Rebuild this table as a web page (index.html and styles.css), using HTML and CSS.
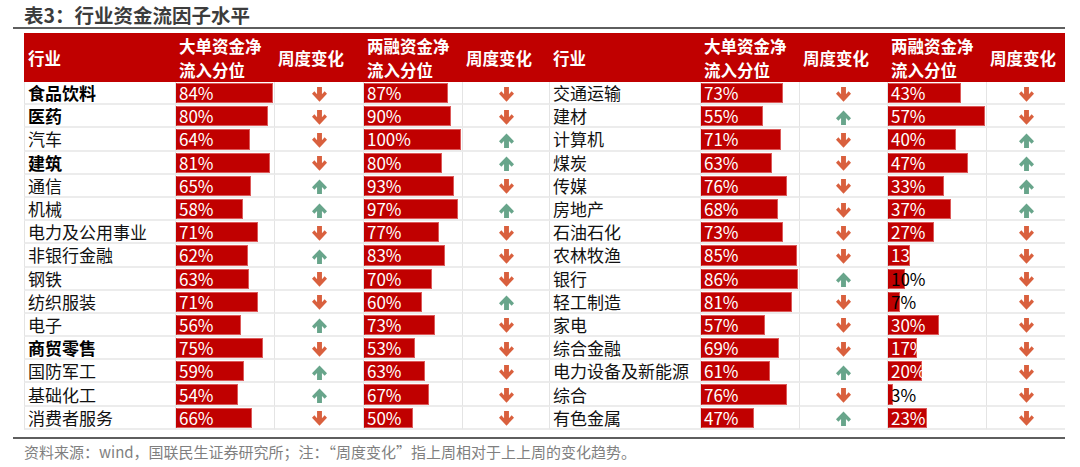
FILE: index.html
```html
<!DOCTYPE html>
<html lang="zh-CN">
<head>
<meta charset="utf-8">
<title>表3：行业资金流因子水平</title>
<link rel="stylesheet" href="styles.css">
</head>
<body>
<svg width="0" height="0" class="defs">
  <defs>
    <symbol id="dn" viewBox="0 0 16 16"><path d="M5.4 0H10.6V7.6L13.5 4.6L16 7.2L8 15.6L0 7.2L2.5 4.6L5.4 7.6Z"/></symbol>
    <symbol id="up" viewBox="0 0 16 16"><path d="M5.4 16H10.6V8.4L13.5 11.4L16 8.8L8 0.4L0 8.8L2.5 11.4L5.4 8.4Z"/></symbol>
  </defs>
</svg>
<div class="page">
  <div class="title-wrap"><h1 class="title">表3：行业资金流因子水平</h1></div>
  <div class="grid">
    <div class="hd">行业</div><div class="hd">大单资金净<br>流入分位</div><div class="hd">周度变化</div><div class="hd">两融资金净<br>流入分位</div><div class="hd">周度变化</div>
    <div class="hd">行业</div><div class="hd">大单资金净<br>流入分位</div><div class="hd">周度变化</div><div class="hd">两融资金净<br>流入分位</div><div class="hd">周度变化</div>

    <div class="c name b">食品饮料</div><div class="c bc"><div class="bar" style="width:100%">84%</div></div><div class="c ar"><svg class="i dn"><use href="#dn"/></svg></div><div class="c bc"><div class="bar" style="width:87%">87%</div></div><div class="c ar"><svg class="i dn"><use href="#dn"/></svg></div>
    <div class="c name">交通运输</div><div class="c bc"><div class="bar" style="width:84.88%">73%</div></div><div class="c ar"><svg class="i dn"><use href="#dn"/></svg></div><div class="c bc"><div class="bar" style="width:75.44%">43%</div></div><div class="c ar"><svg class="i dn"><use href="#dn"/></svg></div>

    <div class="c name b">医药</div><div class="c bc"><div class="bar" style="width:95.24%">80%</div></div><div class="c ar"><svg class="i dn"><use href="#dn"/></svg></div><div class="c bc"><div class="bar" style="width:90%">90%</div></div><div class="c ar"><svg class="i dn"><use href="#dn"/></svg></div>
    <div class="c name">建材</div><div class="c bc"><div class="bar" style="width:63.95%">55%</div></div><div class="c ar"><svg class="i up"><use href="#up"/></svg></div><div class="c bc"><div class="bar" style="width:100%">57%</div></div><div class="c ar"><svg class="i dn"><use href="#dn"/></svg></div>

    <div class="c name">汽车</div><div class="c bc"><div class="bar" style="width:76.19%">64%</div></div><div class="c ar"><svg class="i dn"><use href="#dn"/></svg></div><div class="c bc"><div class="bar" style="width:100%">100%</div></div><div class="c ar"><svg class="i up"><use href="#up"/></svg></div>
    <div class="c name">计算机</div><div class="c bc"><div class="bar" style="width:82.56%">71%</div></div><div class="c ar"><svg class="i dn"><use href="#dn"/></svg></div><div class="c bc"><div class="bar" style="width:70.18%">40%</div></div><div class="c ar"><svg class="i up"><use href="#up"/></svg></div>

    <div class="c name b">建筑</div><div class="c bc"><div class="bar" style="width:96.43%">81%</div></div><div class="c ar"><svg class="i dn"><use href="#dn"/></svg></div><div class="c bc"><div class="bar" style="width:80%">80%</div></div><div class="c ar"><svg class="i up"><use href="#up"/></svg></div>
    <div class="c name">煤炭</div><div class="c bc"><div class="bar" style="width:73.26%">63%</div></div><div class="c ar"><svg class="i dn"><use href="#dn"/></svg></div><div class="c bc"><div class="bar" style="width:82.46%">47%</div></div><div class="c ar"><svg class="i up"><use href="#up"/></svg></div>

    <div class="c name">通信</div><div class="c bc"><div class="bar" style="width:77.38%">65%</div></div><div class="c ar"><svg class="i up"><use href="#up"/></svg></div><div class="c bc"><div class="bar" style="width:93%">93%</div></div><div class="c ar"><svg class="i dn"><use href="#dn"/></svg></div>
    <div class="c name">传媒</div><div class="c bc"><div class="bar" style="width:88.37%">76%</div></div><div class="c ar"><svg class="i dn"><use href="#dn"/></svg></div><div class="c bc"><div class="bar" style="width:57.89%">33%</div></div><div class="c ar"><svg class="i up"><use href="#up"/></svg></div>

    <div class="c name">机械</div><div class="c bc"><div class="bar" style="width:69.05%">58%</div></div><div class="c ar"><svg class="i up"><use href="#up"/></svg></div><div class="c bc"><div class="bar" style="width:97%">97%</div></div><div class="c ar"><svg class="i up"><use href="#up"/></svg></div>
    <div class="c name">房地产</div><div class="c bc"><div class="bar" style="width:79.07%">68%</div></div><div class="c ar"><svg class="i dn"><use href="#dn"/></svg></div><div class="c bc"><div class="bar" style="width:64.91%">37%</div></div><div class="c ar"><svg class="i up"><use href="#up"/></svg></div>

    <div class="c name">电力及公用事业</div><div class="c bc"><div class="bar" style="width:84.52%">71%</div></div><div class="c ar"><svg class="i dn"><use href="#dn"/></svg></div><div class="c bc"><div class="bar" style="width:77%">77%</div></div><div class="c ar"><svg class="i dn"><use href="#dn"/></svg></div>
    <div class="c name">石油石化</div><div class="c bc"><div class="bar" style="width:84.88%">73%</div></div><div class="c ar"><svg class="i dn"><use href="#dn"/></svg></div><div class="c bc"><div class="bar" style="width:47.37%">27%</div></div><div class="c ar"><svg class="i dn"><use href="#dn"/></svg></div>

    <div class="c name">非银行金融</div><div class="c bc"><div class="bar" style="width:73.81%">62%</div></div><div class="c ar"><svg class="i up"><use href="#up"/></svg></div><div class="c bc"><div class="bar" style="width:83%">83%</div></div><div class="c ar"><svg class="i dn"><use href="#dn"/></svg></div>
    <div class="c name">农林牧渔</div><div class="c bc"><div class="bar" style="width:98.84%">85%</div></div><div class="c ar"><svg class="i dn"><use href="#dn"/></svg></div><div class="c bc"><div class="bar" style="width:22.81%">13%</div></div><div class="c ar"><svg class="i dn"><use href="#dn"/></svg></div>

    <div class="c name">钢铁</div><div class="c bc"><div class="bar" style="width:75%">63%</div></div><div class="c ar"><svg class="i dn"><use href="#dn"/></svg></div><div class="c bc"><div class="bar" style="width:70%">70%</div></div><div class="c ar"><svg class="i dn"><use href="#dn"/></svg></div>
    <div class="c name">银行</div><div class="c bc"><div class="bar" style="width:100%">86%</div></div><div class="c ar"><svg class="i up"><use href="#up"/></svg></div><div class="c bc"><div class="bar dark" style="width:17.54%">10%</div></div><div class="c ar"><svg class="i dn"><use href="#dn"/></svg></div>

    <div class="c name">纺织服装</div><div class="c bc"><div class="bar" style="width:84.52%">71%</div></div><div class="c ar"><svg class="i dn"><use href="#dn"/></svg></div><div class="c bc"><div class="bar" style="width:60%">60%</div></div><div class="c ar"><svg class="i up"><use href="#up"/></svg></div>
    <div class="c name">轻工制造</div><div class="c bc"><div class="bar" style="width:94.19%">81%</div></div><div class="c ar"><svg class="i dn"><use href="#dn"/></svg></div><div class="c bc"><div class="bar dark" style="width:12.28%">7%</div></div><div class="c ar"><svg class="i dn"><use href="#dn"/></svg></div>

    <div class="c name">电子</div><div class="c bc"><div class="bar" style="width:66.67%">56%</div></div><div class="c ar"><svg class="i up"><use href="#up"/></svg></div><div class="c bc"><div class="bar" style="width:73%">73%</div></div><div class="c ar"><svg class="i dn"><use href="#dn"/></svg></div>
    <div class="c name">家电</div><div class="c bc"><div class="bar" style="width:66.28%">57%</div></div><div class="c ar"><svg class="i dn"><use href="#dn"/></svg></div><div class="c bc"><div class="bar" style="width:52.63%">30%</div></div><div class="c ar"><svg class="i dn"><use href="#dn"/></svg></div>

    <div class="c name b">商贸零售</div><div class="c bc"><div class="bar" style="width:89.29%">75%</div></div><div class="c ar"><svg class="i dn"><use href="#dn"/></svg></div><div class="c bc"><div class="bar" style="width:53%">53%</div></div><div class="c ar"><svg class="i dn"><use href="#dn"/></svg></div>
    <div class="c name">综合金融</div><div class="c bc"><div class="bar" style="width:80.23%">69%</div></div><div class="c ar"><svg class="i dn"><use href="#dn"/></svg></div><div class="c bc"><div class="bar" style="width:29.82%">17%</div></div><div class="c ar"><svg class="i dn"><use href="#dn"/></svg></div>

    <div class="c name">国防军工</div><div class="c bc"><div class="bar" style="width:70.24%">59%</div></div><div class="c ar"><svg class="i up"><use href="#up"/></svg></div><div class="c bc"><div class="bar" style="width:63%">63%</div></div><div class="c ar"><svg class="i dn"><use href="#dn"/></svg></div>
    <div class="c name">电力设备及新能源</div><div class="c bc"><div class="bar" style="width:70.93%">61%</div></div><div class="c ar"><svg class="i up"><use href="#up"/></svg></div><div class="c bc"><div class="bar" style="width:35.09%">20%</div></div><div class="c ar"><svg class="i dn"><use href="#dn"/></svg></div>

    <div class="c name">基础化工</div><div class="c bc"><div class="bar" style="width:64.29%">54%</div></div><div class="c ar"><svg class="i up"><use href="#up"/></svg></div><div class="c bc"><div class="bar" style="width:67%">67%</div></div><div class="c ar"><svg class="i dn"><use href="#dn"/></svg></div>
    <div class="c name">综合</div><div class="c bc"><div class="bar" style="width:88.37%">76%</div></div><div class="c ar"><svg class="i dn"><use href="#dn"/></svg></div><div class="c bc"><div class="bar dark" style="width:5.26%">3%</div></div><div class="c ar"><svg class="i dn"><use href="#dn"/></svg></div>

    <div class="c name">消费者服务</div><div class="c bc"><div class="bar" style="width:78.57%">66%</div></div><div class="c ar"><svg class="i dn"><use href="#dn"/></svg></div><div class="c bc"><div class="bar" style="width:50%">50%</div></div><div class="c ar"><svg class="i dn"><use href="#dn"/></svg></div>
    <div class="c name">有色金属</div><div class="c bc"><div class="bar" style="width:54.65%">47%</div></div><div class="c ar"><svg class="i up"><use href="#up"/></svg></div><div class="c bc"><div class="bar" style="width:40.35%">23%</div></div><div class="c ar"><svg class="i dn"><use href="#dn"/></svg></div>
  </div>
  <div class="foot">资料来源：wind，国联民生证券研究所；注：“周度变化”指上周相对于上上周的变化趋势。</div>
</div>
</body>
</html>
```

FILE: styles.css
```css
* { box-sizing: border-box; }
html, body { margin: 0; padding: 0; background: #fff; }
body { font-family: "Noto Sans CJK SC", "Noto Sans", sans-serif; }
.defs { position: absolute; width: 0; height: 0; overflow: hidden; }

.page { width: 1065px; padding-left: 13px; }

.title-wrap {
  border-bottom: 2px solid #5e5e5e;
  height: 29px;
  padding-top: 3px;
}
.title {
  margin: 0 0 0 11px;
  font-size: 19.5px;
  line-height: 24px;
  font-weight: 700;
  color: #3c3c3c;
}

.grid {
  margin: 4px 0 0 11px;
  display: grid;
  grid-template-columns: 151px 99px 89px 99px 87px 151px 99px 88px 99px 79px;
  grid-template-rows: 49px repeat(15, 23.2px);
}

.hd {
  background: #c00000;
  color: #fff;
  font-weight: 700;
  font-size: 16.5px;
  line-height: 24px;
  padding: 0 0 0 4px;
  display: flex;
  align-items: center;
  white-space: nowrap;
}

.c {
  border-left: 1px solid #e4e4e4;
  border-bottom: 2px solid #ececec;
  font-size: 17px;
  display: flex;
  align-items: center;
  white-space: nowrap;
}
.name { padding-left: 3px; color: #111; }
.name.b { font-weight: 700; color: #000; }

.bc { padding: 1px 1px 0 0; align-items: stretch; }
.bar {
  background: #c00000;
  border: 1px solid #dc5a5a;
  border-left-color: #c00000;
  color: #fff;
  font-size: 17px;
  line-height: 18px;
  padding-left: 2px;
  white-space: nowrap;
  overflow: visible;
  display: flex;
  align-items: center;
}
.bar.dark { color: #000; }

.ar { justify-content: center; }
.i { width: 15px; height: 15px; margin-top: 3px; }
.i.dn { fill: #d9603e; }
.i.up { fill: #68a58b; }

.foot {
  margin-top: 7px;
  border-top: 2px solid #5e5e5e;
  padding: 3px 0 0 11px;
  font-size: 15px;
  line-height: 20px;
  color: #7f7f7f;
  white-space: nowrap;
}
```
